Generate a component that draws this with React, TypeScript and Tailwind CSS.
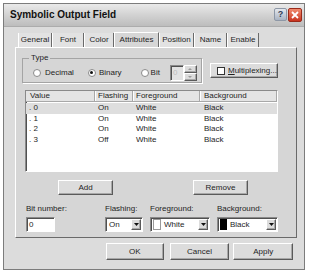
import React from 'react';

const raised = 'border border-t-white border-l-white border-r-[#5a5a5a] border-b-[#5a5a5a] shadow-[inset_-1px_-1px_0_#a8a8a8] bg-[#dcdcdc]';
const sunken = 'border border-t-[#8a8a8a] border-l-[#8a8a8a] border-r-white border-b-white shadow-[inset_1px_1px_0_#505050]';

const tabs = [
  { name: 'General', w: 'w-[34px]' },
  { name: 'Font', w: 'w-[32px]' },
  { name: 'Color', w: 'w-[30px]' },
  { name: 'Attributes', w: 'w-[45px]' },
  { name: 'Position', w: 'w-[35px]' },
  { name: 'Name', w: 'w-[33px]' },
  { name: 'Enable', w: 'w-[32px]' },
];

const rows = [
  { v: '. 0', f: 'On', fg: 'White', bg: 'Black', sel: true },
  { v: '. 1', f: 'On', fg: 'White', bg: 'Black' },
  { v: '. 2', f: 'On', fg: 'White', bg: 'Black' },
  { v: '. 3', f: 'Off', fg: 'White', bg: 'Black' },
];

function Radio({ checked }: { checked?: boolean }) {
  return (
    <span className="w-[8px] h-[8px] rounded-full bg-white border border-[#8a8a8a] flex items-center justify-center shrink-0">
      {checked && <span className="w-[3px] h-[3px] rounded-full bg-[#111]" />}
    </span>
  );
}

function Arrow() {
  return (
    <span className={`${raised} w-[10px] h-[11px] flex items-center justify-center shrink-0`}>
      <svg width="5" height="3" viewBox="0 0 5 3"><path d="M0 0h5L2.5 3z" fill="#111" /></svg>
    </span>
  );
}

export default function App() {
  return (
    <div className="w-[311px] h-[277px] bg-white pt-[3px] pl-[3px] overflow-hidden" style={{ fontFamily: '"Liberation Sans", Arial, sans-serif' }}>
      <div className="w-[302px] h-[267px] bg-[#d6d6d6] border border-[#7c7c7c] flex flex-col text-[8px] text-[#1e1e1e] leading-[10px]">
        {/* title bar */}
        <div className="h-[23px] bg-gradient-to-b from-[#eaeaea] via-[#d2d2d2] to-[#bdbdbd] flex items-center justify-between pl-[6px] pr-[2px] border-b border-[#acacac]">
          <span className="font-bold text-[10px] text-[#111] leading-[12px]">Symbolic Output Field</span>
          <div className="flex gap-[1px]">
            <span className="w-[13px] h-[13px] rounded-[2px] bg-gradient-to-b from-[#e4e8ee] to-[#a9b3c2] border border-[#8d97a6] flex items-center justify-center text-[9px] font-bold text-[#2f3d55] leading-none">?</span>
            <span className="w-[14px] h-[14px] rounded-[2px] bg-gradient-to-b from-[#f08a6e] to-[#c8301c] border border-[#9a2a1a] flex items-center justify-center">
              <svg width="8" height="8" viewBox="0 0 8 8"><path d="M1 1l6 6M7 1L1 7" stroke="#fff" strokeWidth="1.8" /></svg>
            </span>
          </div>
        </div>

        <div className="px-[11px] flex flex-col bg-[#dcdcdc] flex-1">
          {/* tabs */}
          <div className="mt-[6px] h-[14px] flex pl-[3px] items-end">
            {tabs.map(t => (
              <span
                key={t.name}
                className={`${t.w} h-[14px] flex items-center justify-center border-r border-r-[#6a6a6a] border-l border-l-white ${t.name === 'Attributes' ? 'bg-[#d6d6d6] h-[15px] border-t border-t-white' : 'bg-[#e2e2e2]'}`}
              >
                {t.name}
              </span>
            ))}
          </div>

          {/* panel */}
          <div className="h-[191px] w-[282px] bg-[#d6d6d6] border border-t-white border-l-white border-r-[#6a6a6a] border-b-[#6a6a6a] flex flex-col">
            <div className="flex mt-[10px] ml-[6px]">
              <div className="relative w-[180px] h-[25px] border border-[#a4a4a4] shadow-[1px_1px_0_#fff] flex items-center pl-[10px]">
                <span className="absolute -top-[6px] left-[6px] bg-[#d6d6d6] px-[2px]">Type</span>
                <div className="flex items-center gap-[4px] mt-[4px]">
                  <Radio />
                  <span>Decimal</span>
                </div>
                <div className="flex items-center gap-[3px] ml-[14px] mt-[4px]">
                  <Radio checked />
                  <span>Binary</span>
                </div>
                <div className="flex items-center gap-[2px] ml-[19px] mt-[4px]">
                  <Radio />
                  <span>Bit</span>
                </div>
                <div className="flex ml-[10px] mt-[5px] h-[16px]">
                  <span className={`${sunken} w-[14px] bg-[#e2e2e2] text-[#bdbdbd] pl-[2px] flex items-center`}>0</span>
                  <div className="flex flex-col w-[13px]">
                    <span className={`${raised} h-[8px] flex items-center justify-center`}>
                      <svg width="4" height="2" viewBox="0 0 4 2"><path d="M0 2h4L2 0z" fill="#9a9a9a" /></svg>
                    </span>
                    <span className={`${raised} h-[8px] flex items-center justify-center`}>
                      <svg width="4" height="2" viewBox="0 0 4 2"><path d="M0 0h4L2 2z" fill="#9a9a9a" /></svg>
                    </span>
                  </div>
                </div>
              </div>
              <button className={`${raised} ml-[8px] mt-[5px] w-[68px] h-[15px] flex items-center pl-[6px] gap-[3px] text-[8px]`}>
                <span className="w-[8px] h-[8px] bg-white border border-[#333]" />
                <span><span className="underline">M</span>ultiplexing...</span>
              </button>
            </div>

            {/* list view */}
            <div className={`${sunken} bg-white mt-[7px] ml-[9px] w-[253px] h-[82px] flex flex-col`}>
              <div className="flex h-[11px] bg-[#e4e4e4] border-b border-[#a8a8a8]">
                <span className="w-[69px] pl-[4px] border-r border-[#a8a8a8] shadow-[1px_0_0_#fff]">Value</span>
                <span className="w-[38px] pl-[3px] border-r border-[#a8a8a8] shadow-[1px_0_0_#fff]">Flashing</span>
                <span className="w-[67px] pl-[3px] border-r border-[#a8a8a8] shadow-[1px_0_0_#fff]">Foreground</span>
                <span className="flex-1 pl-[4px] border-r border-[#a8a8a8]">Background</span>
              </div>
              <div className="mt-[1px]">
                {rows.map(r => (
                  <div key={r.v} className={`flex h-[10.5px] items-center ${r.sel ? 'bg-[#dedede]' : ''}`}>
                    <span className="w-[69px] pl-[3px]">{r.v}</span>
                    <span className="w-[38px] pl-[3px]">{r.f}</span>
                    <span className="w-[67px] pl-[3px]">{r.fg}</span>
                    <span className="flex-1 pl-[4px]">{r.bg}</span>
                  </div>
                ))}
              </div>
            </div>

            {/* add / remove */}
            <div className="flex mt-[8px]">
              <button className={`${raised} ml-[42px] w-[55px] h-[15px] text-[8px]`}>Add</button>
              <button className={`${raised} ml-[80px] w-[55px] h-[15px] text-[8px]`}>Remove</button>
            </div>

            {/* edit row */}
            <div className="flex mt-[9px] ml-[10px]">
              <div className="flex flex-col w-[79px]">
                <span>Bit number:</span>
                <span className={`${sunken} bg-white mt-[3px] w-[29px] h-[15px] pl-[2px] flex items-center`}>0</span>
              </div>
              <div className="flex flex-col w-[45px]">
                <span>Flashing:</span>
                <span className={`${sunken} bg-white mt-[3px] w-[38px] h-[15px] pl-[3px] pr-[1px] flex items-center justify-between`}>
                  On
                  <Arrow />
                </span>
              </div>
              <div className="flex flex-col w-[67px]">
                <span>Foreground:</span>
                <span className={`${sunken} bg-white mt-[3px] w-[60px] h-[15px] pl-[2px] pr-[1px] flex items-center`}>
                  <span className="w-[8px] h-[11px] bg-white border border-[#9a9a9a]" />
                  <span className="ml-[3px] flex-1">White</span>
                  <Arrow />
                </span>
              </div>
              <div className="flex flex-col">
                <span>Background:</span>
                <span className={`${sunken} bg-white mt-[3px] w-[61px] h-[15px] pl-[2px] pr-[1px] flex items-center`}>
                  <span className="w-[7px] h-[11px] bg-black" />
                  <span className="ml-[3px] flex-1">Black</span>
                  <Arrow />
                </span>
              </div>
            </div>
          </div>

          {/* dialog buttons */}
          <div className="flex mt-[5px] ml-[91px]">
            <button className={`${raised} w-[58px] h-[17px] text-[8px]`}>OK</button>
            <button className={`${raised} ml-[6px] w-[60px] h-[17px] text-[8px]`}>Cancel</button>
            <button className={`${raised} ml-[4px] w-[60px] h-[17px] text-[8px]`}>Apply</button>
          </div>
        </div>
      </div>
    </div>
  );
}
